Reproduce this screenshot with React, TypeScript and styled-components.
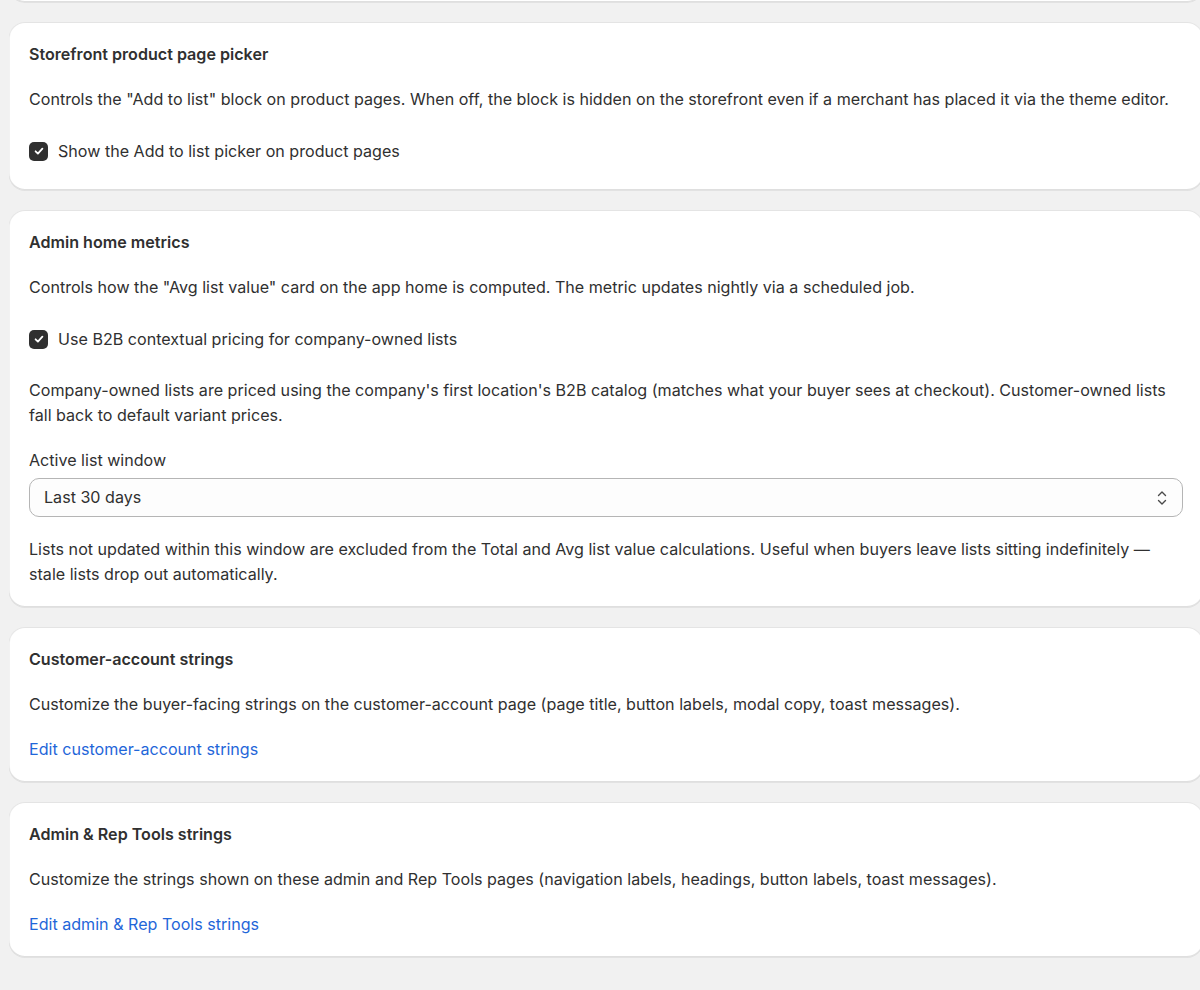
import styled, { createGlobalStyle } from 'styled-components'

const GlobalStyle = createGlobalStyle`
	html, body {
		margin: 0;
		padding: 0;
		background: #f1f1f1;
		overflow: hidden;
	}
	body {
		font-family: 'Inter', 'Noto Sans', sans-serif;
		color: #303030;
		-webkit-font-smoothing: antialiased;
	}
`

const Page = styled.main`
	width: 1194px;
	margin-left: 9px;
	display: flex;
	flex-direction: column;
	gap: 20px;
	padding-bottom: 40px;
`

const Card = styled.section<{ $offset?: boolean }>`
	background: #ffffff;
	border-radius: 16px;
	box-shadow: 0 1px 0 0 rgba(26, 26, 26, 0.07), 0 1px 0 0 rgba(208, 208, 208, 0.4) inset,
		0 -1px 0 0 rgba(204, 204, 204, 0.5) inset, 0 0 0 1px rgba(0, 0, 0, 0.05) inset;
	padding: 20px;
	display: flex;
	flex-direction: column;
	gap: 20px;
	// the first card is scrolled mostly out of view, only its bottom edge shows
	${(props) => (props.$offset ? 'margin-top: -78px; height: 80px; box-sizing: border-box;' : '')}
`

const Title = styled.h2`
	margin: 0;
	font-size: 16.1px;
	line-height: 25px;
	font-weight: 600;
	color: #303030;
`

const Text = styled.p`
	margin: 0;
	font-size: 16.1px;
	line-height: 25px;
	font-weight: 400;
	color: #303030;
`

const CheckRow = styled.label`
	display: flex;
	align-items: center;
	gap: 10px;
	padding: 6.5px 0;
	font-size: 16.1px;
	line-height: 25px;
	cursor: pointer;
`

const Box = styled.span`
	width: 19px;
	height: 19px;
	border-radius: 5px;
	background: #303030;
	display: inline-flex;
	align-items: center;
	justify-content: center;
	flex-shrink: 0;
`

const Field = styled.div`
	display: flex;
	flex-direction: column;
	gap: 5px;
`

const Label = styled.span`
	font-size: 16.1px;
	line-height: 25px;
	color: #303030;
`

const Select = styled.div`
	height: 39px;
	box-sizing: border-box;
	border: 1px solid #b5b5b5;
	border-radius: 10px;
	background: #fdfdfd;
	display: flex;
	align-items: center;
	justify-content: space-between;
	padding: 0 13px 0 14px;
	font-size: 16.1px;
	line-height: 25px;
	color: #303030;
`

const Link = styled.a`
	font-size: 16.1px;
	line-height: 25px;
	color: #1f66d9;
	text-decoration: none;
	align-self: flex-start;
	cursor: pointer;
`

function Checkbox({ label }: { label: string }) {
	return (
		<CheckRow>
			<Box>
				<svg width="12" height="12" viewBox="0 0 12 12" fill="none">
					<path d="M2.6 6.3l2.3 2.3 4.5-5" stroke="#fff" strokeWidth="1.8" strokeLinecap="round" strokeLinejoin="round" />
				</svg>
			</Box>
			<span>{label}</span>
		</CheckRow>
	)
}

export default function App() {
	return (
		<>
			<GlobalStyle />
			<Page>
				<Card $offset />

				<Card>
					<Title>Storefront product page picker</Title>
					<Text>
						Controls the "Add to list" block on product pages. When off, the block is hidden on the storefront even if a
						merchant has placed it via the theme editor.
					</Text>
					<Checkbox label="Show the Add to list picker on product pages" />
				</Card>

				<Card>
					<Title>Admin home metrics</Title>
					<Text>
						Controls how the "Avg list value" card on the app home is computed. The metric updates nightly via a scheduled
						job.
					</Text>
					<Checkbox label="Use B2B contextual pricing for company-owned lists" />
					<Text>
						Company-owned lists are priced using the company's first location's B2B catalog (matches what your buyer sees
						at checkout). Customer-owned lists fall back to default variant prices.
					</Text>
					<Field>
						<Label>Active list window</Label>
						<Select>
							<span>Last 30 days</span>
							<svg width="14" height="18" viewBox="0 0 14 18" fill="none">
								<path d="M3.5 6.5L7 3l3.5 3.5M3.5 11.5L7 15l3.5-3.5" stroke="#4a4a4a" strokeWidth="1.4" strokeLinecap="round" strokeLinejoin="round" />
							</svg>
						</Select>
					</Field>
					<Text>
						Lists not updated within this window are excluded from the Total and Avg list value calculations. Useful when
						buyers leave lists sitting indefinitely — stale lists drop out automatically.
					</Text>
				</Card>

				<Card>
					<Title>Customer-account strings</Title>
					<Text>
						Customize the buyer-facing strings on the customer-account page (page title, button labels, modal copy, toast
						messages).
					</Text>
					<Link>Edit customer-account strings</Link>
				</Card>

				<Card>
					<Title>Admin &amp; Rep Tools strings</Title>
					<Text>
						Customize the strings shown on these admin and Rep Tools pages (navigation labels, headings, button labels,
						toast messages).
					</Text>
					<Link>Edit admin &amp; Rep Tools strings</Link>
				</Card>
			</Page>
		</>
	)
}
